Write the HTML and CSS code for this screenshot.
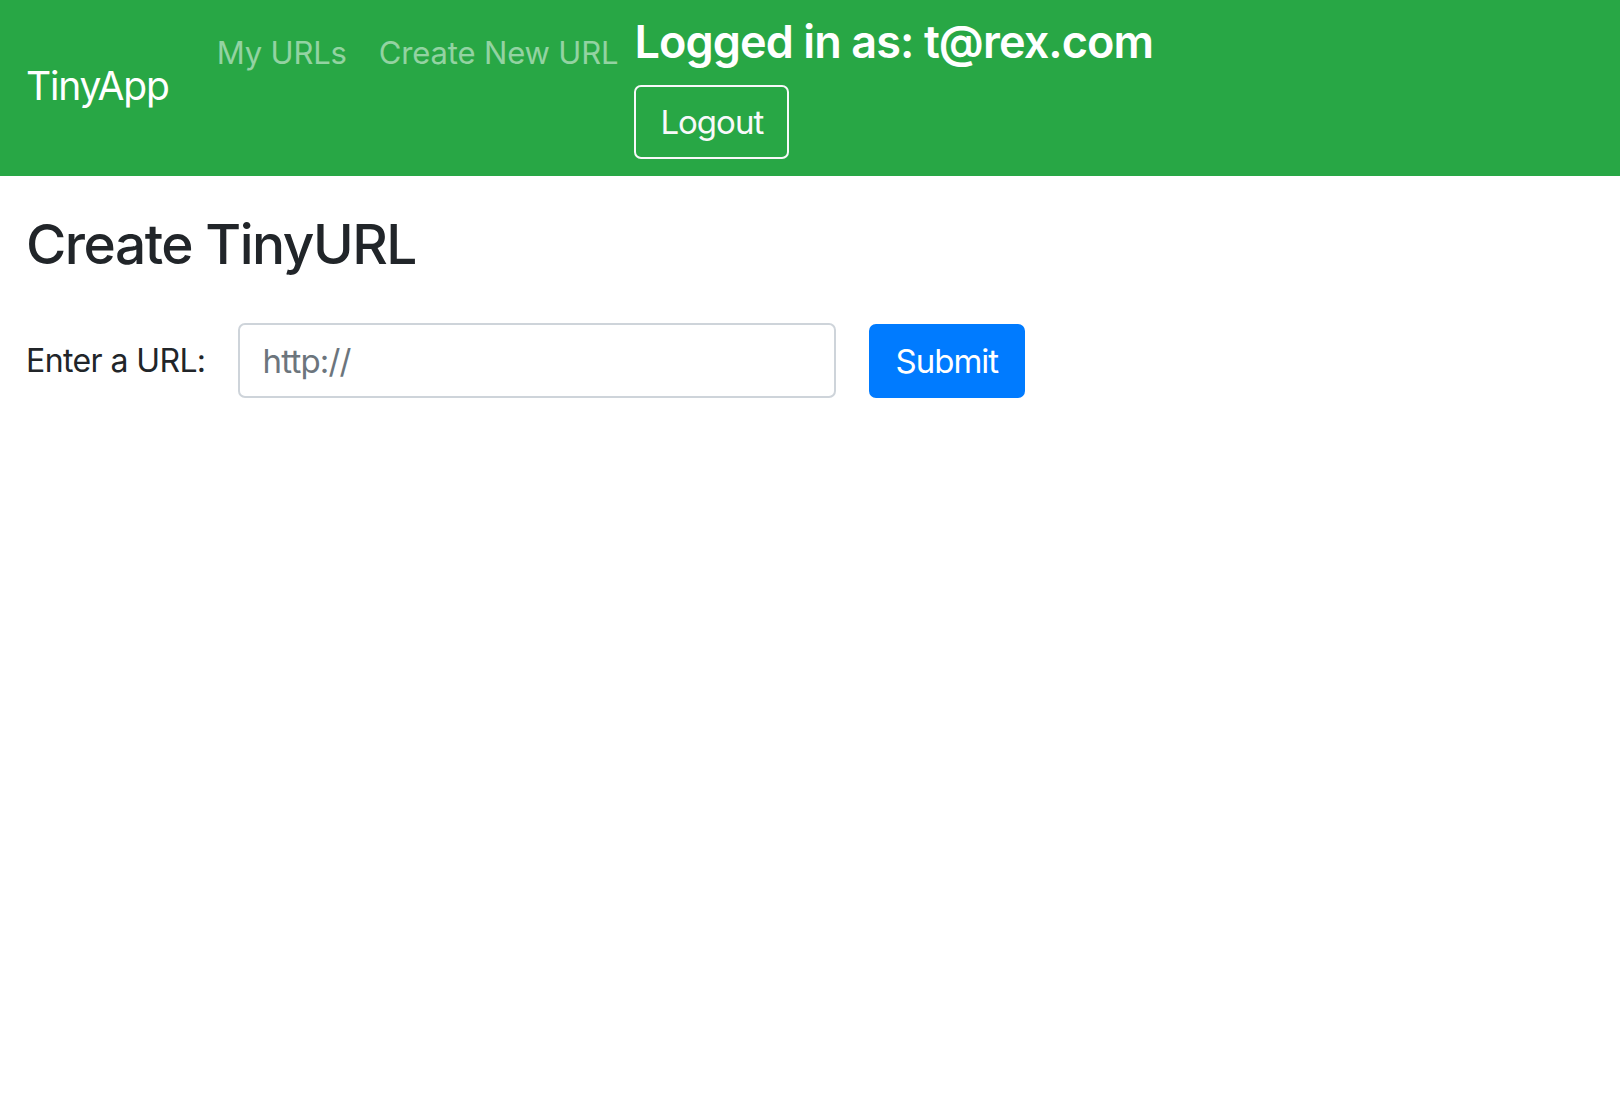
FILE: index.html
```html
<!DOCTYPE html>
<html lang="en">
<head>
<meta charset="utf-8">
<title>TinyApp</title>
<link rel="stylesheet" href="styles.css">
</head>
<body>
<nav class="navbar">
  <a class="brand" href="#">TinyApp</a>
  <ul class="nav-links">
    <li><a class="nav-link" href="#">My URLs</a></li>
    <li><a class="nav-link" href="#">Create New URL</a></li>
  </ul>
  <div class="user-box">
    <h2 class="user-title">Logged in as: t@rex.com</h2>
    <form class="logout-form">
      <button type="button" class="btn btn-outline">Logout</button>
    </form>
  </div>
</nav>
<main class="content">
  <h1 class="page-title">Create TinyURL</h1>
  <form class="url-form">
    <label class="url-label" for="longURL">Enter a URL:</label>
    <input class="url-input" id="longURL" type="text" placeholder="http://">
    <button type="button" class="btn btn-primary">Submit</button>
  </form>
</main>
</body>
</html>
```

FILE: styles.css
```css
* { box-sizing: border-box; }
html, body {
  margin: 0;
  padding: 0;
  background: #fff;
}
body {
  font-family: Inter, "Noto Sans", "Liberation Sans", sans-serif;
  color: #212529;
}
.navbar {
  display: flex;
  align-items: flex-start;
  height: 176px;
  background: #28a745;
  padding-left: 26px;
}
.brand {
  margin-top: 56px;
  font-size: 39px;
  line-height: 60px;
  color: #fff;
  text-decoration: none;
  letter-spacing: -1.2px;
  margin-right: 32px;
}
.nav-links {
  display: flex;
  list-style: none;
  margin: 30px 0 0 0;
  padding: 0;
}
.nav-link {
  display: block;
  padding: 0 16px;
  font-size: 31px;
  line-height: 45px;
  color: rgba(255, 255, 255, 0.5);
  text-decoration: none;
  letter-spacing: -0.15px;
}
.user-box {
  margin-top: 15px;
  margin-left: 0;
}
.user-title {
  margin: 0;
  font-size: 45px;
  line-height: 54px;
  font-weight: 600;
  color: #fff;
  letter-spacing: -0.9px;
}
.logout-form {
  margin: 16px 0 0 0;
}
.btn {
  display: inline-block;
  height: 74px;
  padding: 0 24px;
  font-family: inherit;
  font-size: 33px;
  line-height: 70px;
  border-radius: 7px;
  border: 2px solid transparent;
  cursor: pointer;
  letter-spacing: -1px;
}
.btn-outline {
  background: transparent;
  color: #f8f9fa;
  border-color: #f8f9fa;
}
.btn-primary {
  background: #007bff;
  color: #fff;
  border-color: #007bff;
  margin-left: 33px;
  padding: 0 25px;
}
.content {
  padding: 0 26px;
}
.page-title {
  margin: 35px 0 0 0;
  font-size: 55px;
  line-height: 66px;
  font-weight: 500;
  letter-spacing: -1.5px;
}
.url-form {
  display: flex;
  align-items: center;
  margin-top: 46px;
}
.url-label {
  font-size: 32px;
  line-height: 48px;
  letter-spacing: -0.6px;
}
.url-input {
  width: 598px;
  height: 75px;
  margin-left: 32px;
  padding: 0 23px;
  border: 2px solid #ced4da;
  border-radius: 7px;
  font-family: inherit;
  font-size: 33px;
  letter-spacing: -0.8px;
  color: #495057;
  outline: none;
}
.url-input::placeholder {
  color: #6c757d;
  opacity: 1;
}
```
